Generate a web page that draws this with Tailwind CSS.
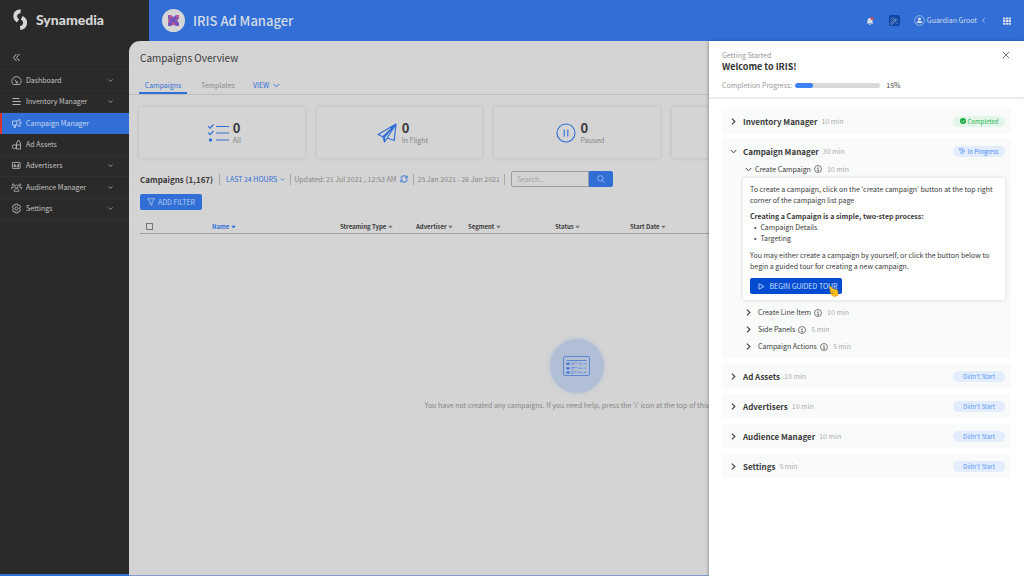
<!DOCTYPE html>
<html lang="en">
<head>
<meta charset="utf-8">
<meta name="viewport" content="width=device-width, initial-scale=1">
<title>IRIS Ad Manager</title>
<script src="https://cdn.jsdelivr.net/npm/@tailwindcss/browser@4"></script>
</head>
<body class="flex h-screen flex-col overflow-hidden bg-[#2a2a2a] font-['Noto_Sans_CJK_JP','Open_Sans',sans-serif] text-[7px] leading-[11px] text-[#3a3a3a]">

<svg class="hidden" aria-hidden="true">
  <symbol id="down" viewBox="0 0 8 8"><path d="M.8 2.300L4 5.500l3.200-3.200" fill="none" stroke="currentColor" stroke-width="1.100"/></symbol>
  <symbol id="right" viewBox="0 0 8 8"><path d="M2.200.800l3.400 3.200-3.400 3.200" fill="none" stroke="currentColor" stroke-width="1.200"/></symbol>
  <symbol id="caret" viewBox="0 0 8 6"><path d="M.5.800h7L4 5.200z" fill="currentColor"/></symbol>
  <symbol id="info" viewBox="0 0 10 10"><g fill="none" stroke="currentColor" stroke-width=".8"><circle cx="5" cy="5" r="4.400"/><path d="M4 4.300h1.200v3M3.800 7.300h2.600"/></g><circle cx="5" cy="2.800" r=".6" fill="currentColor"/></symbol>
</svg>

<header class="flex h-[41px] shrink-0 bg-[#316fd6] text-[#d6dce8]">
  <a href="#" aria-label="Synamedia" class="flex w-[149px] shrink-0 items-center gap-2 bg-[#2a2a2a] pb-[2px] pl-3 text-[#d6d6d6]">
    <svg class="h-[22px] w-4" viewBox="0 0 16 22"><g fill="none" stroke="currentColor" stroke-width="4"><path d="M8.600 2.600C4.500 2.200 3 5 3.300 8c.3 2 1.300 3 2.700 3.900"/><path d="M9.700 8.800c3.300 1.500 3.800 4 3.100 6.700-.6 2.200-2.300 3.400-4.700 3.600"/></g></svg>
    <span class="font-['Lato','Inter',sans-serif] text-[14px] font-black leading-4">Synamedia</span>
  </a>
  <div class="flex min-w-0 flex-1 items-center gap-2 pl-[13px] pr-2">
    <svg class="size-[23px]" viewBox="0 0 23 23"><circle cx="11.500" cy="11.500" r="11.500" fill="#d6d6d6"/><path d="M6 6.500Q6 6 6.500 6H9l2.500 2L14 6h2.500q.5 0 .5.500V9l-2 2.500L17 14v2.500q0 .5-.5.500H14l-2.500-1.500L9 17H6.500q-.5 0-.5-.5V14l2-2.500L6 9z" fill="#7457b8"/><path d="M6 8.800l2 2.700-2 2.300zM17 9l-3 2.500 3 2.500-2-2.500zM9 17l2.500-4.500L14 17l-2.500-1.500zM6.500 6H9l1.500 2.500L8 9zM15 6h1.500l.5.500V8l-3 1z" fill="#cf5593"/></svg>
    <h1 class="text-[13px] font-medium leading-5">IRIS Ad Manager</h1>
    <div class="ml-auto flex items-center">
      <button aria-label="Notifications" class="mr-[14px]"><svg class="size-[10px]" viewBox="0 0 10 10"><path d="M1.500 7.500l1-1.300V4.500C2.500 3 3.500 2 5 2s2.500 1 2.500 2.500v1.700l1 1.300zM4 8.200h2c0 1.200-2 1.200-2 0z" fill="#dcdfe8"/><circle cx="7" cy="2.500" r="1.500" fill="#df4550"/></svg></button>
      <button aria-label="Design tools" class="mr-[14px] flex size-[11px] items-center justify-center rounded-[2px] bg-[#0f47a3]"><svg class="size-2" viewBox="0 0 8 8" fill="none" stroke="#aebfe0" stroke-width=".7"><path d="M.8 6.600l4.800-4.800 1 1-4.800 4.800zM4.700 2.700l1 1M1.200 1l1.500 1.600M3.800.500v1.300M.5 3.800h1.200M6 5.500l1.300 1.300M7 5l.5-.2"/></svg></button>
      <button class="mr-[17px] flex items-center gap-[2px]">
        <svg class="size-[11px]" viewBox="0 0 11 11"><circle cx="5.500" cy="5.500" r="4.900" fill="none" stroke="currentColor" stroke-width=".6"/><circle cx="5.500" cy="4" r="1.600" fill="currentColor"/><path d="M2.500 8c0-3 6-3 6 0z" fill="currentColor"/></svg>
        <span>Guardian Groot</span>
        <svg class="ml-[2px] size-[5px] rotate-180"><use href="#right"/></svg>
      </button>
      <button aria-label="Apps" class="mr-[5px]"><svg class="size-2" viewBox="0 0 8 8" fill="currentColor"><path d="M0 .5h2.300v2H0zM2.900.5h2.300v2H2.900zM5.700.5H8v2H5.700zM0 3.100h2.300v2H0zM2.900 3.100h2.300v2H2.900zM5.700 3.100H8v2H5.700zM0 5.700h2.300v2H0zM2.900 5.700h2.300v2H2.900zM5.700 5.700H8v2H5.700z"/></svg></button>
    </div>
  </div>
</header>

<div class="relative flex min-h-0 flex-1">
  <nav aria-label="Main" class="flex w-[129px] shrink-0 flex-col border-b-2 border-[#316fd6] text-[#c4c4c4]">
    <button aria-label="Collapse menu" class="flex h-7 items-center pl-3 pt-1"><svg class="size-[9px]" viewBox="0 0 9 9" fill="none" stroke="currentColor" stroke-width=".9"><path d="M4.500 1L1.500 4.500l3 3.500M7.500 1l-3 3.500 3 3.500"/></svg></button>
    <ul class="grid h-[151px] grid-rows-7 border-t border-[#303030]">
      <li class="border-b border-[#303030]"><a href="#" class="flex h-full items-center gap-1 pl-[11px] pr-4"><svg class="size-[11px]" viewBox="0 0 11 11" fill="none" stroke="currentColor" stroke-width=".8"><path d="M2.200 9.500C-.8 6 1.500 1.700 5.500 1.700S11.800 6 8.800 9.500zM5.500 7L3.500 4.500"/><circle cx="6" cy="7.500" r=".8"/></svg><span class="flex-1">Dashboard</span><svg class="size-[5px]"><use href="#down"/></svg></a></li>
      <li class="border-b border-[#303030]"><a href="#" class="flex h-full items-center gap-1 pl-[11px] pr-4"><svg class="size-[11px]" viewBox="0 0 11 11" fill="none" stroke="currentColor" stroke-width=".9"><path d="M1.500 2.500h7M1.500 5.500H10M1.500 8.500h8"/></svg><span class="flex-1">Inventory Manager</span><svg class="size-[5px]"><use href="#down"/></svg></a></li>
      <li><a href="#" aria-current="page" class="flex h-full items-center gap-1 border-l-2 border-[#d9342f] bg-[#316fd6] pl-[9px] pr-4 text-[#c9d8f2]"><svg class="size-[11px]" viewBox="0 0 11 11" fill="none" stroke="currentColor" stroke-width=".8"><path d="M1.500 3h4.200L9 1.500v7L5.700 7H1.500zM5.700 3v4M3 7v2.500h1.500V7M10 4v2"/></svg><span class="flex-1">Campaign Manager</span></a></li>
      <li class="border-b border-[#303030]"><a href="#" class="flex h-full items-center gap-1 pl-[11px] pr-4"><svg class="size-[11px]" viewBox="0 0 11 11" fill="none" stroke="currentColor" stroke-width=".8"><circle cx="3.300" cy="7.700" r="2"/><path d="M5.500 6h4v4h-4zM5.500 6V4L7.500 1l2 3v2"/></svg><span class="flex-1">Ad Assets</span></a></li>
      <li class="border-b border-[#303030]"><a href="#" class="flex h-full items-center gap-1 pl-[11px] pr-4"><svg class="size-[11px]" viewBox="0 0 11 11" fill="none" stroke="currentColor" stroke-width=".8"><rect x="1.400" y="2.400" width="7.700" height="6" rx=".6"/><path d="M2.700 7l1-3 1 3M3 6.200h1.400M7.600 3.800V7H6.500c-1 0-1-1.700 0-1.700h1.100"/></svg><span class="flex-1">Advertisers</span><svg class="size-[5px]"><use href="#down"/></svg></a></li>
      <li class="border-b border-[#303030]"><a href="#" class="flex h-full items-center gap-1 pl-[11px] pr-4"><svg class="size-[11px]" viewBox="0 0 11 11" fill="none" stroke="currentColor" stroke-width=".7"><circle cx="5.500" cy="4.500" r="1.500"/><circle cx="2.200" cy="3" r="1.100"/><circle cx="8.800" cy="3" r="1.100"/><path d="M3 9.300c0-3.600 5-3.600 5 0zM.5 7.300V5.400h2.300M10.500 7.300V5.400H8.200"/></svg><span class="flex-1">Audience Manager</span><svg class="size-[5px]"><use href="#down"/></svg></a></li>
      <li class="border-b border-[#303030]"><a href="#" class="flex h-full items-center gap-1 pl-[11px] pr-4"><svg class="size-[11px]" viewBox="0 0 11 11" fill="none" stroke="currentColor" stroke-width=".8"><path d="M4.500 1h2l.4 1.300 1.400-.3 1.200 1.800L8.700 5.500l.8 1.700L8.300 9l-1.400-.3L6.500 10h-2l-.4-1.300L2.700 9 1.500 7.200l.8-1.700-.8-1.700L2.700 2l1.400.3z"/><circle cx="5.500" cy="5.500" r="1.600"/></svg><span class="flex-1">Settings</span><svg class="size-[5px]"><use href="#down"/></svg></a></li>
    </ul>
  </nav>

  <!-- Dark backing behind the rounded corner of the page surface -->
  <div class="flex min-w-0 flex-1 bg-linear-to-r from-[#2a2a2a] from-[20px] to-[#316fd6] to-[20px]">
  <main class="flex min-w-0 flex-1 flex-col overflow-hidden rounded-tl-[11px] border-b border-[#7f9cd0] bg-[#d4d4d4]">
    <h2 class="pl-[11px] pt-[10px] text-[10px] leading-[14px]">Campaigns Overview</h2>
    <div class="mt-3 flex h-[18px] shrink-0 border-b border-[#bdbdbd] pl-[10px] text-[#8b8b8b]">
      <a href="#" class="flex w-12 justify-center border-b-2 border-[#316fd6] pt-[3px] text-[#316fd6]">Campaigns</a>
      <a href="#" class="ml-[14px] pt-[3px]">Templates</a>
      <button class="ml-[18px] flex items-start gap-1 pt-[3px] text-[#316fd6]">VIEW <svg class="mt-[2px] size-[7px]"><use href="#down"/></svg></button>
    </div>
    <section aria-label="Totals" class="mt-3 grid shrink-0 grid-cols-5 gap-3 pl-[10px] pr-[9px]">
      <div class="flex h-[51px] items-center justify-center gap-[3px] rounded-[2px] pl-1 shadow-[0_0_4px_rgba(0,0,0,0.13)]">
        <svg class="h-5 w-[23px] shrink-0" viewBox="0 0 23 20" fill="none" stroke="#316fd6" stroke-width="1.200"><path d="M1 3.200l2 2L6.500 1.500M1 9.700l2 2L6.500 8M9 3.500h13M9 10h13M9 17h13"/><circle cx="3.500" cy="17" r="1.100" fill="#316fd6"/></svg>
        <div class="flex flex-col"><b class="text-[13px] font-bold leading-[15px]">0</b><span class="leading-[10px] text-[#858585]">All</span></div>
      </div>
      <div class="flex h-[51px] items-center justify-center gap-[5px] rounded-[2px] pl-[6px] shadow-[0_0_4px_rgba(0,0,0,0.13)]">
        <svg class="h-5 w-5 shrink-0" viewBox="0 0 20 20" fill="none" stroke="#316fd6" stroke-width="1.200" stroke-linejoin="round"><path d="M19 1L1 11.500l5 2.200L19 1l-1.800 16.500-7-2.500M6 13.700L7.500 19l2.700-4L19 1 7.500 14v5"/></svg>
        <div class="flex flex-col"><b class="text-[13px] font-bold leading-[15px]">0</b><span class="leading-[10px] text-[#858585]">In Flight</span></div>
      </div>
      <div class="flex h-[51px] items-center justify-center gap-[5px] rounded-[2px] pl-[6px] shadow-[0_0_4px_rgba(0,0,0,0.13)]">
        <svg class="h-5 w-5 shrink-0" viewBox="0 0 20 20" fill="none" stroke="#316fd6" stroke-width="1.100"><circle cx="10" cy="10" r="9"/><path d="M8.200 6.500v7M11.800 6.500v7"/></svg>
        <div class="flex flex-col"><b class="text-[13px] font-bold leading-[15px]">0</b><span class="leading-[10px] text-[#858585]">Paused</span></div>
      </div>
      <div class="h-[51px] rounded-[2px] shadow-[0_0_4px_rgba(0,0,0,0.13)]"></div>
      <div class="h-[51px] rounded-[2px] shadow-[0_0_4px_rgba(0,0,0,0.13)]"></div>
    </section>
    <div class="mt-[13px] flex h-4 shrink-0 items-center pl-[11px] text-[#858585]">
      <h3 class="text-[8px] font-bold text-[#3a3a3a]">Campaigns (1,167)</h3>
      <button class="ml-[6px] flex h-[11px] items-center gap-[3px] border-l border-[#a8a8a8] pl-[6px] text-[#316fd6]">LAST 24 HOURS <svg class="size-[5px]"><use href="#down"/></svg></button>
      <span class="ml-[5px] border-l border-[#a8a8a8] pl-[3px]">Updated: 21 Jul 2021 , 12:53 AM</span>
      <button aria-label="Refresh" class="ml-[3px]"><svg class="size-2" viewBox="0 0 8 8" fill="none" stroke="#316fd6"><path d="M.8 3.800A3.100 3.100 0 0 1 6.600 2.300M7.200 4.200A3.100 3.100 0 0 1 1.400 5.700"/><path d="M7.200.700v2.200H5M.8 7.300V5.100H3"/></svg></button>
      <span class="ml-[5px] border-l border-[#a8a8a8] pl-1">25 Jan 2021 - 26 Jan 2021</span>
      <form class="ml-1 flex h-[11px] items-center border-l border-[#a8a8a8] pl-[6px]">
        <input type="search" aria-label="Search campaigns" placeholder="Search..." class="h-4 w-[78px] rounded-l-[2px] border border-[#9c9c9c] px-[5px] placeholder:text-[#a3a3a3]">
        <button type="button" aria-label="Search" class="flex h-4 w-6 items-center justify-center rounded-r-[2px] bg-[#316fd6] text-[#a9c2ee]"><svg class="size-2" viewBox="0 0 8 8" fill="none" stroke="currentColor" stroke-width=".8"><circle cx="3.400" cy="3.400" r="2.700"/><path d="M5.400 5.400L7.600 7.600"/></svg></button>
      </form>
    </div>
    <div class="mt-[7px] flex pl-[11px]"><button class="flex h-4 items-center gap-[3px] rounded-[2px] bg-[#316fd6] px-[7px] text-[#b9cdf0]"><svg class="size-2" viewBox="0 0 8 8" fill="none" stroke="currentColor" stroke-width=".8"><path d="M.5.800h7L5 4v3.300L3 6V4z"/></svg>ADD FILTER</button></div>
    <div class="mt-[10px] pl-[11px]">
    <table class="w-full table-fixed border-b border-[#9f9f9f] text-left text-[6px] leading-[13px]">
      <thead><tr>
        <th class="w-[72px] pl-[6px]"><input type="checkbox" aria-label="Select all campaigns" class="block size-[7px] appearance-none border border-[#777]"></th>
        <th class="w-32 font-bold text-[#316fd6]">Name <svg class="inline-block h-1 w-[5px]"><use href="#caret"/></svg></th>
        <th class="w-[76px] font-bold">Streaming Type <svg class="inline-block h-1 w-[5px] text-[#777]"><use href="#caret"/></svg></th>
        <th class="w-[52px] font-bold">Advertiser <svg class="inline-block h-1 w-[5px] text-[#777]"><use href="#caret"/></svg></th>
        <th class="w-[87px] font-bold">Segment <svg class="inline-block h-1 w-[5px] text-[#777]"><use href="#caret"/></svg></th>
        <th class="w-[75px] font-bold">Status <svg class="inline-block h-1 w-[5px] text-[#777]"><use href="#caret"/></svg></th>
        <th class="font-bold">Start Date <svg class="inline-block h-1 w-[5px] text-[#777]"><use href="#caret"/></svg></th>
      </tr></thead>
    </table>
    </div>
    <div class="mt-[105px] flex flex-col items-center gap-1">
      <div class="flex size-[54px] items-center justify-center rounded-full bg-[#b1bfd6] shadow-[0_0_5px_#b1bfd6]">
        <svg class="h-5 w-[27px]" viewBox="0 0 27 20" fill="none" stroke="#5b87d3"><rect x=".5" y=".5" width="26" height="19" rx="1.500"/><path d="M3.500 4.500h20"/><path d="M3.500 7.800h3M3.500 12.200h3M3.500 16.500h3" stroke="#316fd6" stroke-width="2"/><path d="M8 7h6M8 8.500h2.500M15 7.800h4M20.500 7.800h3M8 11.500h6M8 13h2.500M15 12.200h4M20.500 12.200h3M8 15.800h6M8 17.300h2.500M15 16.500h4M20.500 16.500h3" stroke-width=".7"/></svg>
      </div>
      <p class="pt-[3px] text-[#858585]">You have not created any campaigns. If you need help, press the ‘i’ icon at the top of this page.</p>
    </div>
  </main>
  </div>

  <!-- Getting Started drawer, over the page -->
  <aside aria-label="Getting Started" class="absolute inset-y-0 right-0 flex w-[315px] flex-col bg-white shadow-[-1px_0_3px_rgba(0,0,0,0.25)]">
    <header class="relative h-[57px] shrink-0 border-b border-[#e6e6e6] pl-[13px] pt-[9px] shadow-[0_1px_2px_rgba(0,0,0,0.08)]">
      <p class="leading-[10px] text-[#999]">Getting Started</p>
      <h2 class="text-[9px] font-bold leading-[14px] text-[#333]">Welcome to IRIS!</h2>
      <div class="mt-[6px] flex items-center text-[#999]">
        <span>Completion Progress:</span>
        <div role="progressbar" aria-label="Completion Progress" aria-valuenow="15" aria-valuemin="0" aria-valuemax="100" class="ml-[3px] mr-[6px] h-[5px] w-[85px] overflow-hidden rounded-full bg-[#d9d9d9]"><div class="h-full w-[18px] rounded-full bg-[#3b82f6]"></div></div>
        <span class="text-[#444]">15%</span>
      </div>
      <button aria-label="Close" class="absolute right-[14px] top-[10px] text-[#777]"><svg class="block size-2" viewBox="0 0 8 8"><path d="M.8.800l6.400 6.400M7.200.800L.8 7.200" stroke="currentColor"/></svg></button>
    </header>
    <div class="flex flex-col gap-[6px] px-[13px] py-[11px]">
      <section class="flex h-6 items-center rounded-[2px] bg-[#f9fafa] pl-2 pr-[6px]">
        <button class="flex items-center"><svg class="mr-[6px] size-[7px]"><use href="#right"/></svg><span class="text-[8px] font-bold text-[#3a3a3a]">Inventory Manager</span></button>
        <span class="ml-1 text-[#aaa]">10 min</span>
        <span class="ml-auto flex h-[11px] w-[52px] items-center justify-center gap-[2px] rounded-full bg-[#e3f6e9] text-[6px] text-[#22b14c]"><svg class="size-[6px]" viewBox="0 0 6 6"><circle cx="3" cy="3" r="3" fill="#16a53f"/><path d="M1.500 3.100l1.100 1 2-2" fill="none" stroke="#fff" stroke-width=".8"/></svg>Completed</span>
      </section>
      <section class="rounded-[2px] bg-[#f9fafa] pb-[3px] pl-2 pr-[6px]">
        <div class="flex h-6 items-center">
          <button class="flex items-center"><svg class="mr-[6px] size-[7px]"><use href="#down"/></svg><span class="text-[8px] font-bold text-[#3a3a3a]">Campaign Manager</span></button>
          <span class="ml-1 text-[#aaa]">30 min</span>
          <span class="ml-auto flex h-[11px] w-[52px] items-center justify-center gap-[2px] rounded-full bg-[#e3edfd] text-[6px] text-[#4a8cfb]"><svg class="size-[6px]" viewBox="0 0 6 6" fill="none" stroke="currentColor" stroke-width=".8"><path d="M1 1.500a2.400 2.400 0 1 1 0 3M.6.500v1.500h1.500M3 2v1.200l1 .6"/></svg>In Progress</span>
        </div>
        <div class="flex h-3 items-center pl-[15px]">
          <button class="flex items-center gap-[3px]"><svg class="size-[7px]"><use href="#down"/></svg><span>Create Campaign</span></button>
          <svg class="ml-[3px] size-2"><use href="#info"/></svg><span class="ml-[5px] text-[#aaa]">10 min</span>
        </div>
        <div class="ml-[13px] mt-[3px] rounded-[2px] bg-white py-[6px] pl-[7px] pr-[5px] shadow-[0_0_4px_rgba(0,0,0,0.14)]">
          <p>To create a campaign, click on the ‘create campaign’ button at the top right corner of the campaign list page</p>
          <p class="mt-[5px] font-bold">Creating a Campaign is a simple, two-step process:</p>
          <ul class="pl-1"><li class="flex gap-1 before:content-['•']">Campaign Details</li><li class="flex gap-1 before:content-['•']">Targeting</li></ul>
          <p class="mt-[6px]">You may either create a campaign by yourself, or click the button below to begin a guided tour for creating a new campaign.</p>
          <div class="relative mt-[6px] flex">
            <button class="flex h-4 w-[92px] items-center justify-center gap-1 rounded-[2px] bg-[#034cd1] pl-1 text-[#cfe0ff]"><svg class="size-[7px]" viewBox="0 0 7 7"><path d="M1 .8l5 2.700-5 2.700z" fill="none" stroke="currentColor" stroke-width=".8"/></svg>BEGIN GUIDED TOUR</button>
            <svg class="absolute left-[79px] top-2 h-[11px] w-[10px]" viewBox="0 0 10 11"><path d="M.6.600l1.300-.2 2.300 2.700 3.600.5 1.300 2.400-.4 3.700-4.300.8-2.400-2.500.2-1.300-1.300-.6.400-1.200z" fill="#fcc21b" stroke="#c88500" stroke-width=".5"/><path d="M2.500 5.500l2 .5M2.800 7.500l2 .2" stroke="#8a5a00" stroke-width=".6"/></svg>
          </div>
        </div>
        <div class="mt-1 flex h-[17px] items-center pl-[15px]"><button class="flex items-center gap-[6px]"><svg class="size-[7px]"><use href="#right"/></svg><span>Create Line Item</span></button><svg class="ml-[3px] size-2"><use href="#info"/></svg><span class="ml-[5px] text-[#aaa]">10 min</span></div>
        <div class="flex h-[17px] items-center pl-[15px]"><button class="flex items-center gap-[6px]"><svg class="size-[7px]"><use href="#right"/></svg><span>Side Panels</span></button><svg class="ml-[3px] size-2"><use href="#info"/></svg><span class="ml-[5px] text-[#aaa]">5 min</span></div>
        <div class="flex h-[17px] items-center pl-[15px]"><button class="flex items-center gap-[6px]"><svg class="size-[7px]"><use href="#right"/></svg><span>Campaign Actions</span></button><svg class="ml-[3px] size-2"><use href="#info"/></svg><span class="ml-[5px] text-[#aaa]">5 min</span></div>
      </section>
      <section class="flex h-6 items-center rounded-[2px] bg-[#f9fafa] pl-2 pr-[6px]"><button class="flex items-center"><svg class="mr-[6px] size-[7px]"><use href="#right"/></svg><span class="text-[8px] font-bold text-[#3a3a3a]">Ad Assets</span></button><span class="ml-1 text-[#aaa]">10 min</span><span class="ml-auto flex h-[11px] w-[52px] items-center justify-center rounded-full bg-[#e3edfd] text-[6px] text-[#5c98fb]">Didn’t Start</span></section>
      <section class="flex h-6 items-center rounded-[2px] bg-[#f9fafa] pl-2 pr-[6px]"><button class="flex items-center"><svg class="mr-[6px] size-[7px]"><use href="#right"/></svg><span class="text-[8px] font-bold text-[#3a3a3a]">Advertisers</span></button><span class="ml-1 text-[#aaa]">10 min</span><span class="ml-auto flex h-[11px] w-[52px] items-center justify-center rounded-full bg-[#e3edfd] text-[6px] text-[#5c98fb]">Didn’t Start</span></section>
      <section class="flex h-6 items-center rounded-[2px] bg-[#f9fafa] pl-2 pr-[6px]"><button class="flex items-center"><svg class="mr-[6px] size-[7px]"><use href="#right"/></svg><span class="text-[8px] font-bold text-[#3a3a3a]">Audience Manager</span></button><span class="ml-1 text-[#aaa]">10 min</span><span class="ml-auto flex h-[11px] w-[52px] items-center justify-center rounded-full bg-[#e3edfd] text-[6px] text-[#5c98fb]">Didn’t Start</span></section>
      <section class="flex h-6 items-center rounded-[2px] bg-[#f9fafa] pl-2 pr-[6px]"><button class="flex items-center"><svg class="mr-[6px] size-[7px]"><use href="#right"/></svg><span class="text-[8px] font-bold text-[#3a3a3a]">Settings</span></button><span class="ml-1 text-[#aaa]">5 min</span><span class="ml-auto flex h-[11px] w-[52px] items-center justify-center rounded-full bg-[#e3edfd] text-[6px] text-[#5c98fb]">Didn’t Start</span></section>
    </div>
  </aside>
</div>
</body>
</html>
